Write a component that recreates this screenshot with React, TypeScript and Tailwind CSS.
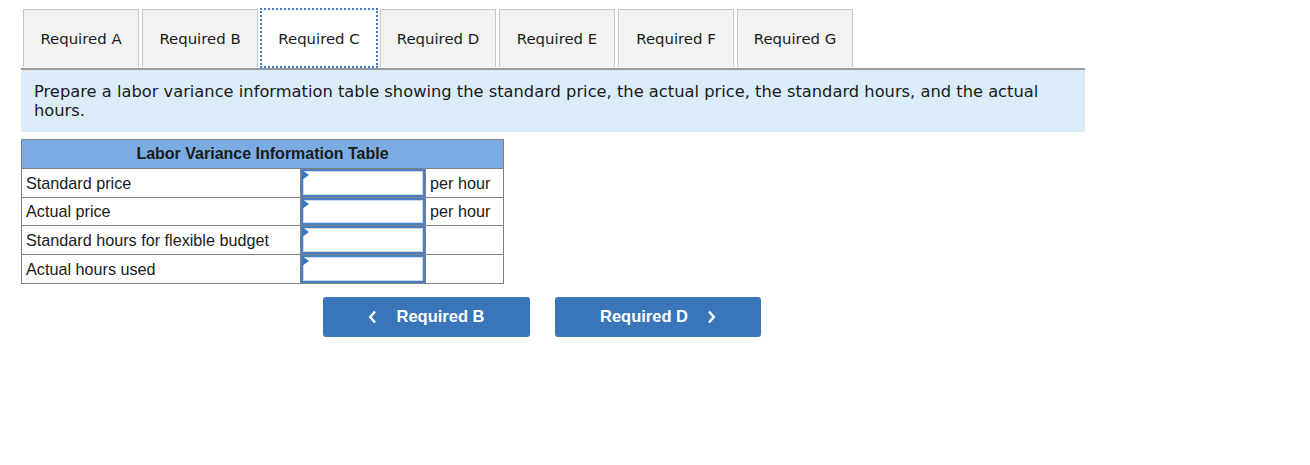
import React from "react";

const tabs = ["Required A", "Required B", "Required C", "Required D", "Required E", "Required F", "Required G"];

const rows: [string, string][] = [
  ["Standard price", "per hour"],
  ["Actual price", "per hour"],
  ["Standard hours for flexible budget", ""],
  ["Actual hours used", ""],
];

function InputCell() {
  return (
    <td className="border border-[#7f7f7f] p-0 w-[125px] h-[28.7px] align-top">
      <div className="relative h-[27.5px] border-2 border-[#4a7fc1] bg-white shadow-[inset_0_0_0_1px_#c9d9ee]">
        <div className="absolute left-[-1px] top-[-1px] w-0 h-0 border-t-[5px] border-b-[5px] border-l-[7px] border-t-transparent border-b-transparent border-l-[#3b76c3]" />
      </div>
    </td>
  );
}

export default function App() {
  return (
    <div className="bg-white w-[1310px] h-[465px] pl-[21px] pt-[9px]" style={{ fontFamily: '"DejaVu Sans", Verdana, sans-serif' }}>
      <div className="flex gap-[3px] pl-[2px]">
        {tabs.map((t, i) =>
          i === 2 ? (
            <div key={t} className="w-[118px] h-[60px] -mt-px -mx-[1px] pt-[3px] flex items-center justify-center bg-white border-2 border-dotted border-[#3f78c0] text-[14.9px] text-[#1a1a1a] relative z-10">
              {t}
            </div>
          ) : (
            <div key={t} className="w-[116px] h-[58px] pt-[2px] flex items-center justify-center bg-[#f2f2f2] border border-b-0 border-[#c8c8c8] text-[14.9px] text-[#1a1a1a]">
              {t}
            </div>
          )
        )}
      </div>
      <div className="w-[1064px] border-t-2 border-[#9a9a9a] bg-[#dbecf9] pl-[13px] pr-[30px] pt-[12px] pb-[12px] text-[16.3px] leading-[19px] text-[#1a1a1a]">
        Prepare a labor variance information table showing the standard price, the actual price, the standard hours, and the actual hours.
      </div>
      <table className="mt-[7px] border-collapse border border-[#7f7f7f] w-[483px]" style={{ fontFamily: '"Liberation Sans", Arial, sans-serif' }}>
        <thead>
          <tr>
            <th colSpan={3} className="bg-[#7aace3] border border-[#7f7f7f] h-[29px] text-[16px] font-bold text-[#1a1a1a] text-center p-0">
              Labor Variance Information Table
            </th>
          </tr>
        </thead>
        <tbody>
          {rows.map(([label, unit]) => (
            <tr key={label}>
              <td className="border border-[#7f7f7f] h-[28.7px] px-[4px] text-[16.2px] text-[#1a1a1a] w-[279px]">{label}</td>
              <InputCell />
              <td className="border border-[#7f7f7f] h-[28.7px] px-[4px] text-[16.2px] text-[#1a1a1a]">{unit}</td>
            </tr>
          ))}
        </tbody>
      </table>
      <div className="flex gap-[25px] mt-[13px] ml-[302px]" style={{ fontFamily: '"Liberation Sans", Arial, sans-serif' }}>
        <button className="w-[207px] h-[40px] rounded-[3px] bg-[#3a75b9] text-white font-bold text-[16.5px] flex items-center justify-center gap-[19px]">
          <svg width="9" height="14" viewBox="0 0 9 14"><path d="M7 1.5 L2.2 7 L7 12.5" stroke="white" strokeWidth="2.4" fill="none" /></svg>
          <span>Required B</span>
        </button>
        <button className="w-[206px] h-[40px] rounded-[3px] bg-[#3a75b9] text-white font-bold text-[16.5px] flex items-center justify-center gap-[19px]">
          <span>Required D</span>
          <svg width="9" height="14" viewBox="0 0 9 14"><path d="M2 1.5 L6.8 7 L2 12.5" stroke="white" strokeWidth="2.4" fill="none" /></svg>
        </button>
      </div>
    </div>
  );
}
